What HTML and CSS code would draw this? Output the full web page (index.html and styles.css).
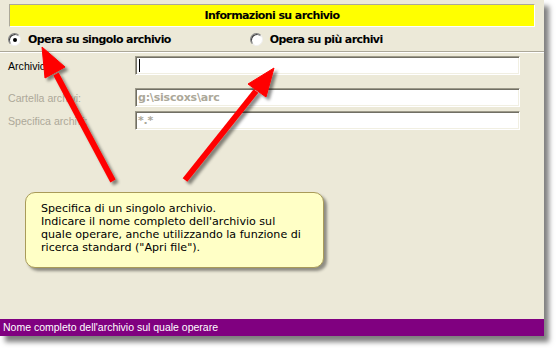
FILE: index.html
```html
<!DOCTYPE html>
<html>
<head>
<meta charset="utf-8">
<link rel="stylesheet" href="styles.css">
</head>
<body>
<div class="window">
  <div class="main">
    <div class="header">Informazioni su archivio</div>
    <div class="radios">
      <label class="radio-item"><span class="radio checked"></span>Opera su singolo archivio</label>
      <label class="radio-item second"><span class="radio"></span>Opera su più archivi</label>
    </div>
    <div class="form">
      <div class="row first">
        <span class="label">Archivio</span>
        <div class="field"><span class="caret"></span></div>
      </div>
      <div class="row gap-lg">
        <span class="label disabled">Cartella archivi:</span>
        <div class="field"><span class="value">g:\siscoxs\arc</span></div>
      </div>
      <div class="row gap-sm">
        <span class="label disabled">Specifica archivi:</span>
        <div class="field"><span class="value">*.*</span></div>
      </div>
    </div>
  </div>
  <div class="status">Nome completo dell'archivio sul quale operare</div>

  <svg class="arrows" width="544" height="336" viewBox="0 0 544 336">
    <defs>
      <filter id="sh" x="-20%" y="-20%" width="140%" height="140%">
        <feDropShadow dx="3" dy="3" stdDeviation="1.6" flood-color="#000" flood-opacity="0.45"/>
      </filter>
    </defs>
    <g filter="url(#sh)" fill="#ff0000" stroke="#ff0000">
      <line x1="113" y1="181" x2="56" y2="74" stroke-width="6"/>
      <polygon points="42,47 65,67 45,78" stroke-width="1"/>
      <line x1="185" y1="180" x2="256" y2="91" stroke-width="6"/>
      <polygon points="274,68 266,97 248,84" stroke-width="1"/>
    </g>
  </svg>

  <div class="tooltip">
    Specifica di un singolo archivio.<br>
    Indicare il nome completo dell'archivio sul<br>
    quale operare, anche utilizzando la funzione di<br>
    ricerca standard ("Apri file").
  </div>
</div>
</body>
</html>
```

FILE: styles.css
```css
html, body {
  margin: 0;
  padding: 0;
  background: #ffffff;
}

body {
  width: 556px;
  height: 348px;
  overflow: hidden;
  font-family: "Liberation Sans", Arial, sans-serif;
  font-size: 11px;
}

.window {
  position: relative;
  width: 544px;
  height: 336px;
  background: #ECE9D8;
  display: flex;
  flex-direction: column;
  box-shadow: 5px 6px 5px rgba(0, 0, 0, 0.5);
}

.main {
  flex: 1;
  display: flex;
  flex-direction: column;
}

.header {
  margin: 4px 9px 0 9px;
  height: 21px;
  background: #FFFF00;
  border-top: 1px solid #ACA899;
  border-left: 1px solid #ACA899;
  border-bottom: 1px solid #ffffff;
  border-right: 1px solid #ffffff;
  text-align: center;
  line-height: 21px;
  font-family: "DejaVu Sans", sans-serif;
  font-weight: bold;
  font-size: 11px;
  color: #000;
  letter-spacing: -0.6px;
}

.radios {
  height: 24px;
  display: flex;
  align-items: center;
  padding-left: 8px;
  border-bottom: 1px solid #ACA899;
  box-shadow: 0 1px 0 #ffffff;
  font-family: "DejaVu Sans", sans-serif;
  font-weight: bold;
  font-size: 11px;
  color: #000;
  letter-spacing: -0.6px;
}

.radio-item {
  display: flex;
  align-items: center;
  gap: 7px;
}

.radio-item.second {
  margin-left: 79px;
}

.radio {
  width: 11px;
  height: 11px;
  border-radius: 50%;
  background: #ffffff;
  border: 1px solid;
  border-color: #808080 #f0f0f0 #f0f0f0 #808080;
  box-shadow: inset 1px 1px 0 #404040;
  position: relative;
  flex: none;
}

.radio.checked::after {
  content: "";
  position: absolute;
  left: 4px;
  top: 4px;
  width: 4px;
  height: 4px;
  border-radius: 50%;
  background: #000;
}

.form {
  display: flex;
  flex-direction: column;
  padding-left: 8px;
}

.row {
  display: flex;
  align-items: center;
  height: 21px;
}

.row.first { margin-top: 3px; }
.row.gap-lg { margin-top: 11px; }
.row.gap-sm { margin-top: 2px; }

.label {
  width: 127px;
  color: #000;
  font-size: 10.6px;
}

.label.disabled {
  color: #ACA899;
}

.field {
  width: 381px;
  height: 17px;
  background: #ffffff;
  border: 1px solid;
  border-color: #9D9A8A #ffffff #ffffff #9D9A8A;
  box-shadow: inset 1px 1px 0 #716F64, inset -1px -1px 0 #F1EFE2;
  display: flex;
  align-items: center;
  padding: 0 0 0 2px;
}

.caret {
  display: block;
  width: 1px;
  height: 13px;
  background: #000;
  margin-left: 1px;
}

.value {
  font-family: "DejaVu Sans", sans-serif;
  font-weight: bold;
  font-size: 11px;
  color: #ACA899;
  letter-spacing: -0.2px;
}

.status {
  height: 17px;
  background: #800080;
  color: #ffffff;
  font-size: 10.5px;
  line-height: 17px;
  padding-left: 3px;
}

.arrows {
  position: absolute;
  left: 0;
  top: 0;
  pointer-events: none;
}

.tooltip {
  position: absolute;
  left: 25px;
  top: 192px;
  width: 282px;
  height: 65px;
  padding: 9px 0 0 15px;
  background: #FFFFC6;
  border: 1px solid #A99B59;
  border-radius: 10px;
  box-shadow: 3px 3px 3px rgba(0, 0, 0, 0.4);
  font-family: "DejaVu Sans", sans-serif;
  font-size: 11.1px;
  line-height: 13px;
  color: #000;
}
```
